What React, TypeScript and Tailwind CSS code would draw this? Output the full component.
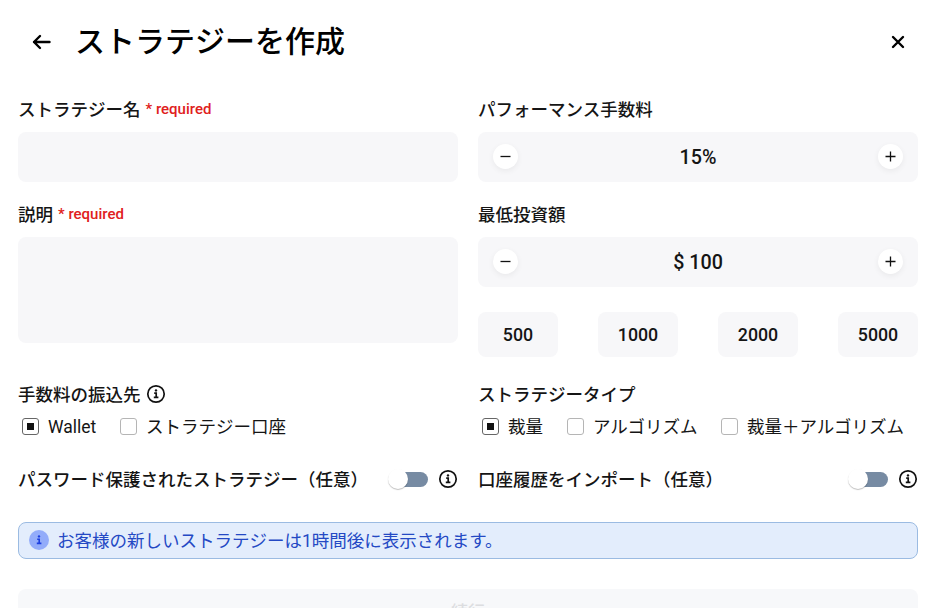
import type { ReactNode } from "react";

function Info() {
  return (
    <svg width="20" height="20" viewBox="0 0 20 20" fill="none" stroke="#111" className="mb-px shrink-0">
      <circle cx="10" cy="10" r="8.2" strokeWidth="1.7" />
      <path d="M8.2 9.2h2v4M7.8 13.4h4.6" strokeWidth="1.7" />
      <circle cx="10" cy="6.4" r="1.2" fill="#111" stroke="none" />
    </svg>
  );
}

function Round({ plus }: { plus?: boolean }) {
  return (
    <button className="flex h-[25px] w-[25px] items-center justify-center rounded-full bg-white shadow-[0_2px_6px_rgba(0,0,0,0.06)]">
      <svg width="11" height="11" viewBox="0 0 11 11" stroke="#111" strokeWidth="1.3">
        <path d={plus ? "M0.5 5.5h10M5.5 0.5v10" : "M0.5 5.5h10"} />
      </svg>
    </button>
  );
}

function Stepper({ value }: { value: string }) {
  return (
    <div className="flex h-[50px] items-center justify-between rounded-lg bg-[#f7f7f9] px-[15px] pb-px text-[19.7px] font-medium">
      <Round />
      <span className="pt-[2px]">{value}</span>
      <Round plus />
    </div>
  );
}

function Check({ on, children, className }: { on?: boolean; children: ReactNode; className: string }) {
  return (
    <div className={`flex items-center text-[17.5px] whitespace-nowrap ${className}`}>
      <span className={`mr-[9px] flex h-[17px] w-[17px] items-center justify-center rounded-[3px] border bg-white ${on ? "border-[#666]" : "border-[#b5b5b5]"}`}>
        {on && <span className="h-[7px] w-[7px] bg-[#111]" />}
      </span>
      <span className="pt-[2px]">{children}</span>
    </div>
  );
}

function Toggle() {
  return (
    <div className="flex items-center">
      <span className="mr-[10px] flex h-5 w-10 items-center">
        <span className="z-10 h-5 w-5 rounded-full bg-white shadow-[0_1px_1px_rgba(0,0,0,0.25)]" />
        <span className="-ml-[10px] h-[15px] w-[30px] rounded-full bg-[#778ba3]" />
      </span>
      <Info />
    </div>
  );
}

function Label({ children, required }: { children: ReactNode; required?: boolean }) {
  return (
    <div className="flex h-[26px] items-center pt-[2px] text-[17.5px] font-medium whitespace-nowrap">
      {children}
      {required && <span className="mb-[2px] ml-[5px] text-[15px] text-[#e02020]">* required</span>}
    </div>
  );
}

export default function App() {
  return (
    <main className="h-[608px] w-[937px] overflow-hidden bg-white pr-[19px] pl-[18px] font-[Roboto,'Noto_Sans_CJK_JP',sans-serif] text-[#151515]">
      <header className="flex h-[84px] items-center pr-[13px] pb-px pl-[14px] text-black">
        <svg width="20" height="16" viewBox="0 0 20 16" fill="none" stroke="currentColor" strokeWidth="2.4" strokeLinecap="round" strokeLinejoin="round"><path d="M17.5 8H2M8 2L2 8l6 6" /></svg>
        <h1 className="ml-[23px] text-[30px] font-medium">ストラテジーを作成</h1>
        <svg className="ml-auto" width="14" height="14" viewBox="0 0 14 14" stroke="currentColor" strokeWidth="2.4" strokeLinecap="round"><path d="M2 2l10 10M12 2L2 12" /></svg>
      </header>
      <div className="grid grid-cols-2 gap-x-5 pt-3">
        <section>
          <Label required>ストラテジー名</Label>
          <div className="mt-[10px] h-[50px] rounded-lg bg-[#f7f7f9]" />
          <div className="h-[19px]" />
          <Label required>説明</Label>
          <div className="mt-[10px] h-[106px] rounded-lg bg-[#f7f7f9]" />
        </section>
        <section>
          <Label>パフォーマンス手数料</Label>
          <div className="mt-[10px] mb-[19px]"><Stepper value="15%" /></div>
          <Label>最低投資額</Label>
          <div className="mt-[10px]"><Stepper value="$ 100" /></div>
          <div className="mt-[25px] flex justify-between">
            {[500, 1000, 2000, 5000].map((n) => (
              <span key={n} className="flex h-[45px] w-20 items-center justify-center rounded-lg bg-[#f7f7f9] pt-px text-[17.8px] font-medium">{n}</span>
            ))}
          </div>
        </section>
      </div>
      <div className="mt-[24px] grid grid-cols-2 gap-x-5">
        <section>
          <div className="flex items-center gap-[5px]"><Label>手数料の振込先</Label><Info /></div>
          <div className="mt-[6px] flex h-[26px] pl-1">
            <Check on className="w-[98px]">Wallet</Check>
            <Check className="">ストラテジー口座</Check>
          </div>
        </section>
        <section>
          <Label>ストラテジータイプ</Label>
          <div className="mt-[6px] flex h-[26px] pl-1">
            <Check on className="w-[85px]">裁量</Check>
            <Check className="w-[154px]">アルゴリズム</Check>
            <Check className="">裁量＋アルゴリズム</Check>
          </div>
        </section>
      </div>
      <div className="mt-[27px] grid grid-cols-2 gap-x-5">
        <div className="flex justify-between"><Label>パスワード保護されたストラテジー（任意）</Label><Toggle /></div>
        <div className="flex justify-between"><Label>口座履歴をインポート（任意）</Label><Toggle /></div>
      </div>
      <div className="mt-[30px] flex h-[37px] items-center rounded-lg border border-[#9bbbe2] bg-[#e3edfc] pl-[10px] text-[17.5px] text-[#2449c4]">
        <svg className="mr-2 mb-[2px]" width="20" height="20" viewBox="0 0 20 20"><circle cx="10" cy="10" r="10" fill="#93acfa" /><path d="M8.2 9.2h2v4M7.8 13.4h4.6" fill="none" stroke="#1c3fe0" strokeWidth="1.6" /><circle cx="10" cy="6.4" r="1.2" fill="#1c3fe0" /></svg>
        <span className="pt-px">お客様の新しいストラテジーは1時間後に表示されます。</span>
      </div>
      <button className="mt-[30px] flex h-[45px] w-full items-center justify-center rounded-lg bg-[#f7f8fa] pt-[3px] text-[17px] font-medium text-[#dcdde0]">続行</button>
    </main>
  );
}
